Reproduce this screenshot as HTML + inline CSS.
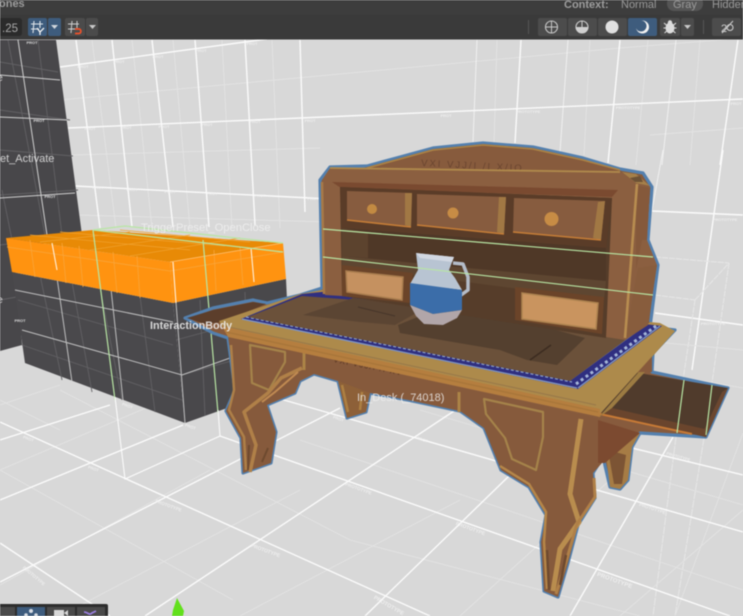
<!DOCTYPE html>
<html><head><meta charset="utf-8">
<style>
html,body{margin:0;padding:0;width:743px;height:616px;overflow:hidden;background:#d8d8d8}
svg{display:block;filter:blur(.5px)}
text{font-family:"Liberation Sans",sans-serif}
.M{stroke:#fff;stroke-width:1.4;fill:none;opacity:.9}
.F{stroke:#e3e3e3;stroke-width:.9;fill:none}
.G{stroke:#b8e6a4;stroke-width:1.2;fill:none}
.D{stroke:#626164;stroke-width:.9;fill:none}
.W{stroke:#e6e6e6;stroke-width:1.1;fill:none}
.P text{fill:#f2f2f2;font-size:4px;font-weight:bold;text-anchor:middle}
.L{fill:#f0f0f0;font-size:10.5px}
.T{fill:#9a9a9a;font-size:11px}
</style></head><body>
<svg width="743" height="616" viewBox="0 0 743 616" xmlns="http://www.w3.org/2000/svg">
<rect width="743" height="616" fill="#d8d8d8"/>
<!-- wall faint -->
<g class="F">
<path d="M60 100L620 48M72 155L320 148M78 215L330 222M620 48L743 38M650 135L743 128"/>
<path d="M92 40L116 228M132 40L152 228M173 40L190 228M222 40L232 228M272 40L280 228M497 40L494 145M590 40L584 155M648 40L636 165M700 40L690 165"/>
</g>
<g class="M">
<path d="M60 67L267 39M68 128L743 99M75 186L330 199"/>
<path d="M76 40L100 228M112 40L132 227M152 40L173 227M195 40L209 227M245 40L255 225M300 40L305 212M521 40L515 143M620 40L608 163M738 40L720 165M723 150L692 370"/>
<path d="M477 40L473 142M568 40L560 152M676 40L662 165M663 150L652 210" stroke-width="1" opacity=".7"/>
<path d="M652 211L743 215M655 313L743 325"/>
</g>
<!-- wire box right -->
<g class="W">
<path d="M655 257L729 263M655 295L695 300M695 300L729 263M729 263L712 383M695 300L683 380" stroke-dasharray="6 1"/>
<path d="M676 437L653 616M704 438L675 616" stroke-dasharray="8 1"/>
</g>
<path d="M655 342L743 350M652 372L743 388" stroke="#e2e2e2" fill="none" stroke-width=".9"/>
<!-- floor faint -->
<g class="F">
<path d="M0 470L233 600M0 400L60 430M60 390L350 540M350 540L640 616M300 440L743 590M420 410L743 505M0 405L60 385M0 470L200 385M0 585L210 470M60 616L300 490M240 616L460 500M460 616L610 480M620 616L743 510M743 433L675 616"/>
</g>
<g class="M">
<path d="M0 422L430 616M220 436L730 616M270 396L743 532M340 377L743 475M0 543L110 616"/>
<path d="M0 500L183 425M0 582L340 408M145 616L454 411M365 616L510 475M570 616L673 437M0 440L110 405"/>
</g>
<!-- gray wall -->
<polygon points="0,40 56,40 82,235 14,250 22,345 0,351" fill="#48474a"/>
<g class="D">
<path d="M0 62L58 72M0 110L70 120M0 150L73 156M0 195L78 190M0 245L78 235M0 300L22 296"/>
<path d="M8 40L45 235M38 40L62 235M2 190L12 240"/>
</g>
<g stroke="#d0d0d0" stroke-width="1" fill="none"><path d="M0 75L60 80M0 117L67 120M0 198L75 193M18 40L47 235"/></g>
<!-- block -->
<polygon points="12,272 173,303 185,423 25,363" fill="#4a494c"/>
<polygon points="173,303 286,279 287,300 230,407 185,423" fill="#49484b"/>
<g class="D">
<path d="M40 275L62 380M72 282L92 392M100 288L122 400M140 296L155 412M22 345L182 400M18 300L173 345M182 375L287 345M176 340L287 310M200 300L205 416M245 292L248 400"/>
</g>
<g stroke="#d4d4d4" stroke-width="1" fill="none" opacity=".85">
<path d="M15 290L173 322M22 330L182 375L230 358M52 243L72 382M107 252L123 400M173 262L185 423"/>
</g>
<polygon points="6,238 93,230 283,243 170,262" fill="#e88a06"/>
<polygon points="6,238 170,262 173,303 12,272" fill="#ff9310"/>
<polygon points="170,262 283,243 286,279 173,303" fill="#ff9310"/>
<g stroke="#f9a53a" stroke-width=".8" fill="none">
<path d="M30 240L35 277M62 243L66 283M79 246L83 287M113 252L117 293M137 256L140 298M214 250L216 291M240 247L243 285"/>
<path d="M7 247L170 271M170 271L283 252"/>
</g>
<g stroke="#f0a230" stroke-width=".7" fill="none"><path d="M30 235L190 250M60 232L225 246M120 230L250 242M40 242L130 232M90 250L190 235M130 256L240 238"/></g>
<path d="M173 262L176 303M52 243L57 270M251 248L254 282" stroke="#fff0dc" stroke-width="1.1"/>
<path d="M170 262L283 243" stroke="#ffc47a" stroke-width=".7"/>
<!-- green box left -->
<g class="G"><path d="M93 230L115 400M203 240L218 413M93 230L283 252M93 230L125 226M125 226L283 243"/></g>
<g class="M"><path d="M115 397L125 479L220 436L218 410" stroke-width="1.1"/></g>
<!-- desk silhouette -->
<polygon id="sil" points="185,318 213,308 253,300 267,303 300,295 322,288 320,180 330,167 367,166 400,157 433,148 483,143 533,147 583,158 620,169 643,173 652,187 648,240 658,265 650,327 675,330 653,353 652,372 728,388 706,437 640,433 632,447 628,480 620,489 610,487 603,457 593,473 595,498 578,525 568,563 558,597 544,591 541,542 546,515 529,487 501,470 484,428 460,411 408,400 370,393 366,412 347,418 338,381 314,374 300,381 295,393 267,405 276,432 271,463 243,473 241,438 226,411 235,390 228,338 213,333" fill="#875b3d" stroke="#5480ae" stroke-width="3.2" stroke-linejoin="round"/>
<!-- left slide -->
<polygon points="187,318 213,310 253,302 266,304 222,322 205,324" fill="#5c3e2b"/>
<!-- back legs -->
<polygon points="338,381 347,418 366,412 370,393 372,385" fill="#8d6038"/>
<path d="M342 385L348 412M362 392L360 410" stroke="#ad8043" stroke-width="2.5" fill="none"/>
<polygon points="604,440 610,487 620,489 628,480 632,447 640,433" fill="#a67c45"/>
<polygon points="608,450 614,484 622,484 626,455" fill="#7c5434"/>
<!-- apron -->
<polygon points="228,336 598,419 602,463 593,473 595,498 578,525 568,563 558,597 544,591 541,542 546,515 529,487 501,470 484,428 460,411 408,400 370,393 338,381 314,374 300,381 295,393 267,405 276,432 271,463 243,473 241,438 226,411 235,390" fill="#865a3c"/>
<!-- apron decoration -->
<path d="M250 345L285 352L285 362L269 390L252 383Z" fill="none" stroke="#a5834a" stroke-width="2.2" stroke-linejoin="round"/>
<path d="M484 399L543 412L543 437L536 470L512 459L505 438L486 414Z" fill="none" stroke="#a5834a" stroke-width="2.2" stroke-linejoin="round"/>
<path d="M304 345V370M459 392V412" stroke="#ab8347" stroke-width="3"/>
<path d="M302 368L281 378L268 393L244 412L256 445L250 472" fill="none" stroke="#b08048" stroke-width="3.5" stroke-linejoin="round"/>
<path d="M231 345L234 390L229 410L244 437L246 470" fill="none" stroke="#ad7f48" stroke-width="2.5" stroke-linejoin="round"/>
<path d="M298 372L275 392L262 402" fill="none" stroke="#c08a52" stroke-width="2"/>
<path d="M581 419L570 494L579 522L560 549L553 591" fill="none" stroke="#b98d4e" stroke-width="5" stroke-linejoin="round"/>
<path d="M500 466L529 484L546 512L544 542L547 589" fill="none" stroke="#b58649" stroke-width="2.5" stroke-linejoin="round"/>
<path d="M594 478L595 497L577 524L566 562L556 594" fill="none" stroke="#b08048" stroke-width="3" stroke-linejoin="round"/>
<path d="M549 590L547 550M560 585L566 555" stroke="#6e4a2f" stroke-width="2.5" fill="none"/>
<path d="M248 470L249 445M262 462L268 448" stroke="#6e4a2f" stroke-width="2" fill="none"/>
<polygon points="598,420 640,433 605,463 598,463" fill="#7c4a30"/>
<text x="333" y="362" fill="#5c3a24" font-size="8" transform="rotate(11 333 362)" letter-spacing="1.2">VXI VJJ/I /I XV</text>
<!-- drawer -->
<polygon points="633,372 728,388 706,437 600,414" fill="#503b2c"/>
<polygon points="600,413 706,437 709,430 612,408" fill="#6a452d"/>
<path d="M600,414L692,434" stroke="#c77a36" stroke-width="2"/>
<polygon points="722,392 728,388 706,437 703,432" fill="#6b4730"/>
<g class="G"><path d="M684 380L677 433M712 385L706 435"/></g>
<!-- table underside right -->
<polygon points="598,418 675,331 653,353 645,372 612,408" fill="#9c7b42"/>
<polygon points="633,372 652,353 652,372" fill="#875a3c"/>
<!-- table top trim -->
<polygon points="219,321 300,294 322,290 660,323 675,331 600,414 228,336" fill="#ad8a4b"/>
<polygon points="222,326 600,409 600,417 228,337" fill="#b57e3f"/>
<path d="M226 332L598 412" stroke="#a8763a" stroke-width="1.4"/>
<path d="M224 326L596 405" stroke="#97784a" stroke-width="1"/>
<!-- tile strip -->
<polygon points="241,319 302,294 340,290 662,326 578,389" fill="#2f2f80"/>
<path d="M242 319L577 388M578 388L660 326" stroke="#7f96c4" stroke-width="1.3" fill="none"/>
<path d="M246 317L572 382" stroke="#8fa6d0" stroke-width="1.2" stroke-dasharray="3 2" fill="none"/>
<path d="M576 384L656 326" stroke="#a4b6d8" stroke-width="3" stroke-dasharray="3 3" fill="none"/>
<path d="M570 380L648 323" stroke="#7f96c4" stroke-width="1.5" fill="none"/>
<!-- tabletop -->
<polygon points="248,317 302,296 650,322 570,381" fill="#6b513a"/>
<polygon points="303,315 353,298 425,308 395,325 360,322" fill="#5b4533"/>
<polygon points="398,325 430,312 520,320 585,338 557,365 527,360 500,350 400,333" fill="#54402f"/>
<path d="M530 360L551 345" stroke="#3c2c20" stroke-width="1.5"/>
<path d="M358 307L395 316" stroke="#46352a" stroke-width="1"/>
<!-- hutch crest -->
<polygon points="367,167 400,158 433,149 483,144 533,148 583,159 625,172 340,172" fill="#875b3d"/>
<path d="M367 168L400 159L433 150L483 145L533 149L583 160L620 170" stroke="#ad8445" stroke-width="1.6" fill="none"/>
<text x="421" y="166" fill="#6a4530" font-size="9.5" letter-spacing="2" transform="rotate(3 421 166)">VXI VJJ/I /I X/IO</text>
<!-- hutch frame -->
<polygon points="322,180 330,168 620,171 636,183 650,187 647,240 657,265 648,325 625,340 342,296 325,295" fill="#8b5f40"/>
<path d="M330 168L620 172" stroke="#b08a4c" stroke-width="1.8"/>
<path d="M322 182L324 294" stroke="#a77a48" stroke-width="2.5"/>
<polygon points="622,172 636,174 650,186 636,183" fill="#a5804a"/>
<polygon points="630,178 640,176 643,182 635,182" fill="#6d5236"/>
<polygon points="636,185 650,188 647,240 642,240 636,270" fill="#85593b"/>
<polygon points="638,268 657,265 648,325 625,340 632,300" fill="#885d3d"/>
<path d="M637 184L625 338" stroke="#b88d50" stroke-width="2.6"/>
<!-- interior -->
<polygon points="332,182 618,190 612,197 341,188" fill="#7a4a30"/>
<polygon points="340,187 612,198 606,338 342,296" fill="#563d2a"/>
<polygon points="340,187 612,198 606,248 342,228" fill="#5a3c28"/>
<polygon points="342,228 606,248 606,283 342,258" fill="#4f3827"/>
<polygon points="342,256 606,281 604,300 342,266" fill="#5e4631"/>
<polygon points="342,228 368,232 368,258 342,256" fill="#5c432e"/>
<!-- drawers -->
<polygon points="347,191 412,193 411,227 347,220" fill="#875c3f"/>
<polygon points="405,193 412,193 411,227 405,225" fill="#a17844"/>
<path d="M347 220L411 227" stroke="#c57d37" stroke-width="1.6"/>
<polygon points="417,194 506,197 504,234 417,225" fill="#875c3f"/>
<polygon points="499,197 506,197 504,234 497,232" fill="#a17844"/>
<path d="M417 225L504 234" stroke="#c57d37" stroke-width="1.6"/>
<polygon points="514,198 605,201 601,240 513,232" fill="#875c3f"/>
<polygon points="598,202 605,201 601,240 593,238" fill="#a17844"/>
<path d="M513 232L601 240" stroke="#c57d37" stroke-width="1.6"/>
<circle cx="372" cy="209" r="5" fill="#c28a42"/>
<circle cx="453" cy="213" r="5.5" fill="#c78c45"/>
<circle cx="551.500" cy="219" r="7" fill="#c78c45"/>
<!-- lower drawers -->
<polygon points="342,265 413,273 410,303 342,296" fill="#6b4429"/>
<polygon points="346,271 403,277 402,300 347,292" fill="#c59160" stroke="#a87c4e" stroke-width="1.5"/>
<polygon points="515,287 604,297 602,334 515,320" fill="#6b4429"/>
<polygon points="522,293 598,303 596,329 522,319" fill="#c9945f" stroke="#ad8350" stroke-width="1.5"/>
<!-- jug -->
<path d="M453 263L463 264L468 277L468 290L457 298" fill="none" stroke="#b4bcc8" stroke-width="3.5" stroke-linejoin="round"/>
<polygon points="416,253 454,257 449,270 455,278 462,290 410,284 418,270" fill="#b8c4d2"/>
<polygon points="416,253 454,257 452,262 420,258" fill="#d2d8e2"/>
<polygon points="410,283 462,290 462,310 433,314 410,305" fill="#3b6da9"/>
<polygon points="410,305 433,314 462,310 457,318 443,325 424,324 416,316" fill="#b1a6a9"/>
<!-- green lines over desk -->
<g class="G"><path d="M323 229L653 257M323 257L653 295"/></g>
<!-- labels -->
<text class="L" x="141" y="231" style="font-size:11.2px" opacity=".85">TriggerPreset_OpenClose</text>
<text class="L" x="150" y="329" style="font-size:10.8px;font-weight:bold" opacity=".85">InteractionBody</text>
<text class="L" x="357" y="401" style="font-size:11px" opacity=".8">In_Desk (_74018)</text>
<text class="L" x="0" y="162" style="font-size:11px" opacity=".8">et_Activate</text>
<text class="L" x="-3" y="81" opacity=".8">e</text>
<text class="L" x="-3" y="303" opacity=".8">e</text>
<!-- PROTOTYPE decals -->
<g class="P" opacity=".85">
<text x="32" y="44">PROT</text><text x="83" y="68">PROT</text><text x="119" y="63">PROT</text><text x="158" y="58">PROT</text><text x="201" y="52">PROT</text><text x="252" y="45">PROT</text>
<text x="39" y="122">PROT</text><text x="90" y="130">PROT</text><text x="126" y="129">PROT</text><text x="164" y="128">PROT</text><text x="207" y="126">PROT</text><text x="255" y="123">PROT</text><text x="310" y="122">PROT</text>
<text x="50" y="198">PROT</text><text x="98" y="189">PROT</text><text x="132" y="191">PROT</text><text x="170" y="193">PROT</text><text x="212" y="195">PROT</text><text x="260" y="197">PROT</text><text x="313" y="200">PROT</text>
<text x="446" y="117">PROT</text><text x="528" y="113">PROTOTYPE</text><text x="628" y="109">PROTOTYPE</text><text x="736" y="105">PROT</text>
<text x="725" y="221">PROTOTYPE</text><text x="713" y="325">PROTOTYPE</text>
<text x="20" y="322" transform="rotate(0 20 322)">PROT</text>
<text x="28" y="440" transform="rotate(20 28 440)">PROT</text><text x="93" y="470" transform="rotate(20 93 470)">PROT</text>
<text x="127" y="407" transform="rotate(20 127 407)">PROT</text><text x="190" y="428" transform="rotate(20 190 428)">PROT</text>
<text x="168" y="507" transform="rotate(20 168 507)" style="font-size:4.500px">PROTOTYPE</text>
<text x="265" y="552" transform="rotate(20 265 552)" style="font-size:5px">PROTOTYPE</text>
<text x="33" y="577" transform="rotate(40 33 577)" style="font-size:4.500px">PROTOTYPE</text>
<text x="388" y="607" transform="rotate(30 388 607)" style="font-size:5.500px">PROTOTYPE</text>
<text x="338" y="420" transform="rotate(20 338 420)">PROT</text>
<text x="358" y="490" transform="rotate(20 358 490)" style="font-size:4.500px">PROTOTYPE</text>
<text x="422" y="441" transform="rotate(20 422 441)">PROT</text>
<text x="470" y="530" transform="rotate(20 470 530)" style="font-size:5px">PROTOTYPE</text>
<text x="652" y="510" transform="rotate(18 652 510)" style="font-size:4.500px">PROTOTYPE</text>
<text x="678" y="458" transform="rotate(16 678 458)">PROTOTYPE</text>
<text x="614" y="582" transform="rotate(20 614 582)" style="font-size:6px">PROTOTYPE</text>
</g>
<!-- cone -->
<polygon points="177,598 184,611 183,616 172,616 173,610" fill="#62e01c"/>
<!-- bottom toolbar -->
<rect x="-3" y="604" width="111" height="14" rx="2" fill="#2d2d2d"/>
<rect x="-3" y="607" width="18" height="12" fill="#4a4a4a"/>
<rect x="17" y="607" width="28" height="12" fill="#3e5c7d"/>
<rect x="47" y="607" width="28" height="12" fill="#4a4a4a"/>
<rect x="77" y="607" width="28" height="12" fill="#4a4a4a"/>
<circle cx="31" cy="611" r="2" fill="#d8dde4"/><circle cx="26" cy="615" r="1.8" fill="#d8dde4"/><circle cx="36" cy="615" r="1.8" fill="#d8dde4"/>
<rect x="54" y="610" width="10" height="8" fill="#d8d8d8"/><polygon points="64,613 68,610 68,616" fill="#d8d8d8"/>
<path d="M84 612C88 612 89 616 92 613L96 611" stroke="#9a7fe0" stroke-width="1.8" fill="none"/>
<!-- top toolbar -->
<rect x="0" y="0" width="743" height="39.5" fill="#3a3a3a"/>
<rect x="0" y="0" width="743" height="15" fill="#3d3d3d"/>
<text x="-1" y="7" fill="#9c9c9c" style="font-size:11px;font-weight:bold">ones</text>
<rect x="-2" y="18" width="24" height="18" rx="3" fill="#2b2b2b"/>
<text x="2" y="32" fill="#a8a8a8" style="font-size:11.5px">.25</text>
<rect x="28" y="18" width="19" height="18" rx="2" fill="#3e5c7d"/>
<rect x="48" y="18" width="13" height="18" rx="2" fill="#3e5c7d"/>
<polygon points="51,25 58,25 54.500,29" fill="#d0d6dc"/>
<path d="M31 24H43M31 29H39M34 21L33 33M40 21V28" stroke="#dfe5ea" stroke-width="1.1" fill="none"/>
<path d="M37 28L40 32L44 28M40 32V35" stroke="#f2f2f2" stroke-width="1.3" fill="none"/>
<rect x="65" y="18" width="20" height="18" rx="2" fill="#4b4b4b"/>
<rect x="86" y="18" width="12" height="18" rx="2" fill="#4b4b4b"/>
<polygon points="89,25 96,25 92.500,29" fill="#c8c8c8"/>
<path d="M68 24H79M68 29H76M72 21L71 33M77 21V28" stroke="#cfcfcf" stroke-width="1" fill="none"/>
<path d="M75 29H79C81.500 29 81.500 33.500 79 33.500H75" stroke="#f0512a" stroke-width="1.7" fill="none"/>
<rect x="528" y="20" width="1" height="14" fill="#555"/>
<text x="564" y="8" fill="#9d9d9d" style="font-size:11px;font-weight:bold">Context:</text>
<text x="621" y="8" class="T">Normal</text>
<rect x="667" y="-4" width="36" height="15" rx="7" fill="#555"/>
<text x="673" y="8" class="T">Gray</text>
<text x="712" y="8" class="T">Hidden</text>
<rect x="538" y="18" width="29" height="18" rx="2" fill="#4c4c4c"/>
<rect x="568" y="18" width="29" height="18" rx="2" fill="#4c4c4c"/>
<rect x="598" y="18" width="29" height="18" rx="2" fill="#4c4c4c"/>
<rect x="628" y="18" width="29" height="18" rx="2" fill="#3e5c7d"/>
<rect x="660" y="18" width="20" height="18" rx="2" fill="#4c4c4c"/>
<rect x="681" y="18" width="13" height="18" rx="2" fill="#4c4c4c"/>
<rect x="703" y="20" width="1" height="14" fill="#555"/>
<rect x="712" y="18" width="29" height="18" rx="2" fill="#4c4c4c"/>
<circle cx="551.500" cy="27" r="6" fill="none" stroke="#c8c8c8" stroke-width="1.1"/>
<path d="M545.500 27H557.500M551.500 21V33" stroke="#c8c8c8" stroke-width="1"/>
<circle cx="582" cy="27" r="6" fill="none" stroke="#d0d0d0" stroke-width="1.1"/>
<path d="M582 27H576A6 6 0 0 0 588 27Z" fill="#d0d0d0"/>
<path d="M582 21V27" stroke="#d0d0d0"/>
<circle cx="612" cy="27" r="6.500" fill="#e0e0e0"/>
<circle cx="642.500" cy="27" r="6.500" fill="#f2f2f2"/>
<circle cx="641" cy="26" r="5.500" fill="#3e5c7d"/>
<ellipse cx="670" cy="28" rx="4.500" ry="5.500" fill="#dcdcdc"/>
<circle cx="670" cy="22.500" r="2.200" fill="#dcdcdc"/>
<path d="M664 23L675.500 33M676 23L664.500 33M663.500 28H676.500" stroke="#dcdcdc" stroke-width="1.1"/>
<polygon points="684,25 691,25 687.500,29" fill="#c8c8c8"/>
<text x="721" y="32" fill="#cfcfcf" style="font-size:11px">2</text>
<circle cx="730" cy="27.500" r="3" fill="none" stroke="#cfcfcf" stroke-width="1.1"/>
<path d="M722 33L733 21" stroke="#cfcfcf" stroke-width="1"/>
</svg>
</body></html>
